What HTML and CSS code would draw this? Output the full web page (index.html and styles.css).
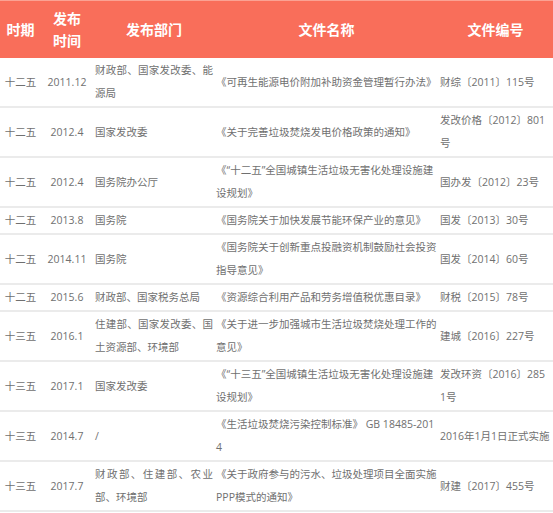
FILE: index.html
```html
<!DOCTYPE html>
<html lang="zh">
<head>
<meta charset="utf-8">
<title>政策文件</title>
<link rel="stylesheet" href="styles.css">
</head>
<body>
<table class="policy">
  <colgroup>
    <col class="c-period">
    <col class="c-date">
    <col class="c-dept">
    <col class="c-name">
    <col class="c-code">
  </colgroup>
  <thead>
    <tr>
      <th>时期</th>
      <th>发布<br>时间</th>
      <th>发布部门</th>
      <th>文件名称</th>
      <th>文件编号</th>
    </tr>
  </thead>
  <tbody>
    <tr>
      <td class="center">十二五</td>
      <td class="center">2011.12</td>
      <td class="dept">财政部、国家发改委、能源局</td>
      <td class="name">《可再生能源电价附加补助资金管理暂行办法》</td>
      <td class="code">财综〔2011〕115号</td>
    </tr>
    <tr>
      <td class="center">十二五</td>
      <td class="center">2012.4</td>
      <td class="dept">国家发改委</td>
      <td class="name">《关于完善垃圾焚烧发电价格政策的通知》</td>
      <td class="code">发改价格〔2012〕801号</td>
    </tr>
    <tr>
      <td class="center">十二五</td>
      <td class="center">2012.4</td>
      <td class="dept">国务院办公厅</td>
      <td class="name">《“十二五”全国城镇生活垃圾无害化处理设施建设规划》</td>
      <td class="code">国办发〔2012〕23号</td>
    </tr>
    <tr>
      <td class="center">十二五</td>
      <td class="center">2013.8</td>
      <td class="dept">国务院</td>
      <td class="name">《国务院关于加快发展节能环保产业的意见》</td>
      <td class="code">国发〔2013〕30号</td>
    </tr>
    <tr>
      <td class="center">十二五</td>
      <td class="center">2014.11</td>
      <td class="dept">国务院</td>
      <td class="name">《国务院关于创新重点投融资机制鼓励社会投资指导意见》</td>
      <td class="code">国发〔2014〕60号</td>
    </tr>
    <tr>
      <td class="center">十二五</td>
      <td class="center">2015.6</td>
      <td class="dept">财政部、国家税务总局</td>
      <td class="name">《资源综合利用产品和劳务增值税优惠目录》</td>
      <td class="code">财税〔2015〕78号</td>
    </tr>
    <tr>
      <td class="center">十三五</td>
      <td class="center">2016.1</td>
      <td class="dept">住建部、国家发改委、国土资源部、环境部</td>
      <td class="name">《关于进一步加强城市生活垃圾焚烧处理工作的意见》</td>
      <td class="code">建城〔2016〕227号</td>
    </tr>
    <tr>
      <td class="center">十三五</td>
      <td class="center">2017.1</td>
      <td class="dept">国家发改委</td>
      <td class="name">《“十三五”全国城镇生活垃圾无害化处理设施建设规划》</td>
      <td class="code">发改环资〔2016〕2851号</td>
    </tr>
    <tr>
      <td class="center">十三五</td>
      <td class="center">2014.7</td>
      <td class="dept">/</td>
      <td class="name">《生活垃圾焚烧污染控制标准》 GB 18485-2014</td>
      <td class="code nowrap">2016年1月1日正式实施</td>
    </tr>
    <tr>
      <td class="center">十三五</td>
      <td class="center">2017.7</td>
      <td class="dept">财政部、住建部、农业部、环境部</td>
      <td class="name">《关于政府参与的污水、垃圾处理项目全面实施PPP模式的通知》</td>
      <td class="code">财建〔2017〕455号</td>
    </tr>
  </tbody>
</table>
</body>
</html>
```
FILE: styles.css
```css
html, body {
  margin: 0;
  padding: 0;
  background: #ffffff;
}

.policy {
  width: 553px;
  border-collapse: collapse;
  table-layout: fixed;
  font-family: "Open Sans", "Noto Sans CJK SC", sans-serif;
  font-size: 10.5px;
  color: #707070;
}

.c-period { width: 41px; }
.c-date { width: 52px; }
.c-dept { width: 122px; }
.c-name { width: 223px; }
.c-code { width: 115px; }

.policy thead tr {
  background: #f96e5a;
  border-top: 1px solid #fba293;
}

.policy th {
  color: #ffffff;
  font-family: "Noto Sans CJK SC", sans-serif;
  font-weight: 700;
  font-size: 14px;
  line-height: 22px;
  padding: 6px 0 7px;
  text-align: center;
  vertical-align: middle;
}

.policy td {
  line-height: 23px;
  padding: 1px 2px;
  vertical-align: middle;
  border-bottom: 2px solid #ebebeb;
}

.policy td.center {
  text-align: center;
  padding: 1px 0;
}

.policy td.dept {
  text-align: justify;
}

.policy td.name {
  padding: 1px 0 1px 1px;
  word-break: break-all;
}

.policy td.code {
  padding: 1px 6px 1px 2px;
  word-break: break-all;
}

.policy td.nowrap {
  white-space: nowrap;
  padding-right: 0;
}
```
